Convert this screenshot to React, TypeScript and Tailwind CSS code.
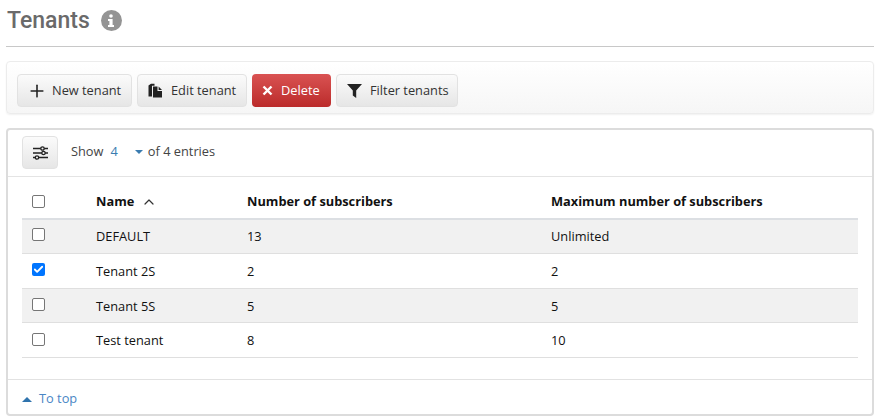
import React from "react";
import { Plus, Check, ChevronUp } from "lucide-react";

const F = "font-['Open_Sans','Noto_Sans',sans-serif]";
const btn = "h-[33px] flex items-center rounded-[4px] border border-[#e2e2e2] bg-gradient-to-b from-[#fbfbfb] to-[#e6e6e6] text-[12.8px] text-[#333]";
const cols = "grid grid-cols-[74px_151px_304px_1fr] items-center";

function Box({ checked }: { checked?: boolean }) {
  return checked ? (
    <span className="w-[13px] h-[13px] rounded-[2px] bg-[#0075ff] flex items-center justify-center">
      <Check size={11} strokeWidth={4} color="#fff" />
    </span>
  ) : (
    <span className="w-[13px] h-[13px] rounded-[2px] border border-[#767676] bg-white block" />
  );
}

const rows = [
  { n: "DEFAULT", a: "13", b: "Unlimited", h: "h-[34px]", bg: "bg-[#f1f1f1]", m: "-mt-[5px]", p: "" },
  { n: "Tenant 2S", a: "2", b: "2", h: "h-[35px]", bg: "bg-white", c: true, m: "-mt-[5px]", p: "pt-[2px]" },
  { n: "Tenant 5S", a: "5", b: "5", h: "h-[34px]", bg: "bg-[#f1f1f1]", m: "-mt-[4px]", p: "pt-[2px]" },
  { n: "Test tenant", a: "8", b: "10", h: "h-[35px]", bg: "bg-white", m: "-mt-[4px]", p: "pt-[2px]" },
];

export default function App() {
  return (
    <div className={`w-[878px] h-[418px] bg-white overflow-hidden pl-[6px] pr-[4px] ${F}`}>
      <div className="h-[47px] border-b border-[#c8c8c8] flex items-start">
        <h1 className="font-['Roboto',sans-serif] text-[23px] leading-[40px] font-medium text-[#6a6a6a] mt-[1px] ml-[1px]">Tenants</h1>
        <span className="ml-[11px] mt-[10px] w-[21px] h-[21px] rounded-full bg-[#949494] flex items-center justify-center">
          <svg width="8" height="13" viewBox="0 0 8 13" fill="#fff"><circle cx="4" cy="2" r="1.8" /><path d="M1 5h4.6v6H7v2H1v-2h1.4V7H1z" /></svg>
        </span>
      </div>
      <div className="mt-[14px] h-[53px] rounded-[4px] border border-[#ececec] bg-gradient-to-b from-white to-[#f6f6f6] shadow-[0_1px_2px_rgba(0,0,0,0.06)] flex items-start gap-[5px] pl-[10px] pt-[12px]">
        <button className={`${btn} w-[115px] pl-[9px]`}>
          <Plus size={20} strokeWidth={1.9} color="#222" className="mr-[5px]" />New tenant
        </button>
        <button className={`${btn} w-[110px] pl-[10px]`}>
          <svg width="15" height="15" viewBox="0 0 15 15" className="mr-[8px]" fill="#222"><path d="M0.5 2.5 3 .8h3.5v2H4v10.7H.5z" /><path d="M5 3.5h4.5V8H14v6.5H5z" /><path d="M10.6 3.5 14 6.9h-3.4z" /></svg>Edit tenant
        </button>
        <button className="h-[33px] w-[79px] flex items-center pl-[10px] rounded-[4px] bg-gradient-to-b from-[#d95252] to-[#bb2a2a] text-[12.8px] text-white">
          <svg width="11" height="11" viewBox="0 0 11 11" className="mr-[8px]"><path d="M1.5 1.5l8 8M9.5 1.5l-8 8" stroke="#fff" strokeWidth="2.4" /></svg>Delete
        </button>
        <button className={`${btn} w-[122px] pl-[10px]`}>
          <svg width="15" height="14" viewBox="0 0 15 14" className="mr-[8px]" fill="#222"><path d="M0 0h15L9.2 6.5V14L5.8 11.5v-5z" /></svg>Filter tenants
        </button>
      </div>
      <div className="mt-[14px] h-[288px] rounded-[4px] border-2 border-[#dcdcdc] bg-white flex flex-col">
        <div className="h-[47px] shrink-0 border-b border-[#e4e4e4] flex items-start pt-[6px] pl-[14px] text-[12.8px] text-[#444]">
          <button className={`${btn} w-[36px] justify-center`}>
            <svg width="15" height="14" viewBox="0 0 15 14" fill="none" stroke="#222" strokeWidth="1.3">
              <path d="M0 2.5h15M0 7h15M0 11.5h15" />
              <circle cx="9.5" cy="2.5" r="1.7" fill="#f2f2f2" />
              <circle cx="10.5" cy="7" r="1.7" fill="#f2f2f2" />
              <circle cx="4" cy="11.5" r="1.7" fill="#f2f2f2" />
            </svg>
          </button>
          <div className="h-[31px] flex items-center">
            <span className="ml-[13px]">Show</span>
            <span className="ml-[7px] text-[#3a7cb0]">4</span>
            <span className="ml-[17px] mr-[5px] w-0 h-0 border-x-[4px] border-x-transparent border-t-[4px] border-t-[#3a7cb0]" />
            <span>of 4 entries</span>
          </div>
        </div>
        <div className="mx-[14px] text-[12.8px] text-[#111] flex-1">
          <div className={`h-[43px] ${cols} border-b-2 border-[#dcdfe3] font-bold pt-[8px]`}>
            <span className="pl-[10px] -mt-[1px]"><Box /></span>
            <span className="flex items-center gap-[7px]">Name <ChevronUp size={16} strokeWidth={1.8} color="#333" /></span>
            <span>Number of subscribers</span>
            <span>Maximum number of subscribers</span>
          </div>
          {rows.map((r) => (
            <div key={r.n} className={`${r.h} ${r.bg} ${r.p} ${cols} border-b border-[#dfdfdf]`}>
              <span className={`pl-[10px] ${r.m}`}><Box checked={r.c} /></span>
              <span>{r.n}</span>
              <span>{r.a}</span>
              <span>{r.b}</span>
            </div>
          ))}
        </div>
        <div className="h-[35px] shrink-0 border-t border-[#e2e2e2] flex items-center pl-[14px] pt-[4px] text-[12.8px] text-[#4a86c5]">
          <span className="mr-[7px] w-0 h-0 border-x-[5px] border-x-transparent border-b-[5px] border-b-[#2f73ad]" />To top
        </div>
      </div>
    </div>
  );
}
